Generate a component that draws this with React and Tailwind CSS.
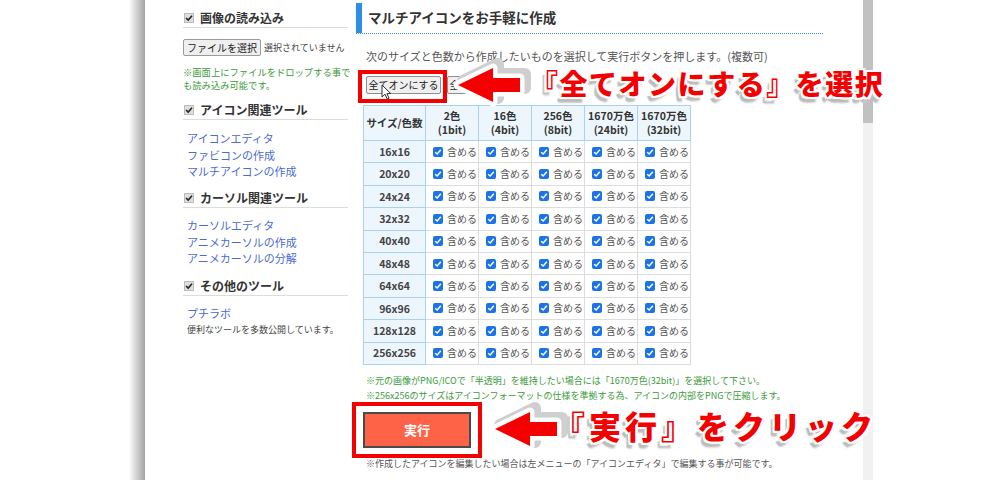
import React from "react";

const sizes = ["16x16", "20x20", "24x24", "32x32", "40x40", "48x48", "64x64", "96x96", "128x128", "256x256"];
const colors = [
  ["2色", "(1bit)"],
  ["16色", "(4bit)"],
  ["256色", "(8bit)"],
  ["1670万色", "(24bit)"],
  ["1670万色", "(32bit)"],
];

const GrayCheck = () => (
  <span className="w-[10px] h-[10px] bg-[#dedede] border border-[#bcbcbc] flex items-center justify-center shrink-0">
    <svg width="8" height="8" viewBox="0 0 8 8">
      <path d="M1 4 L3.2 6 L7 1.8" fill="none" stroke="#222" strokeWidth="1.6" />
    </svg>
  </span>
);

const BlueCheck = () => (
  <span className="w-[10px] h-[10px] rounded-[2px] bg-[#1a73e8] flex items-center justify-center shrink-0">
    <svg width="8" height="8" viewBox="0 0 8 8">
      <path d="M1.2 4.2 L3.2 6 L6.8 1.8" fill="none" stroke="#fff" strokeWidth="1.5" />
    </svg>
  </span>
);

const SideHead = ({ children, className }) => (
  <div className={"flex items-center gap-[6px] h-[18px] pb-[2px] pl-[1px] border-b border-[#dcdcdc] " + className}>
    <GrayCheck />
    <span className="text-[12px] font-bold text-[#333] leading-[16px] whitespace-nowrap">{children}</span>
  </div>
);

const Arrow = ({ className }) => (
  <svg className={className} width="90" height="56" viewBox="0 0 90 56">
    <g transform="translate(5,-4)">
      <path d="M10 28 L45 11 L45 21 L72 21 L72 35 L45 35 L45 45 Z" fill="#fff" stroke="#cfcfcf" strokeWidth="12" strokeLinejoin="round" />
    </g>
    <path d="M10 28 L45 11 L45 21 L72 21 L72 35 L45 35 L45 45 Z" fill="#fff" stroke="#fff" strokeWidth="9" strokeLinejoin="round" />
    <path d="M10 28 L45 11 L45 21 L72 21 L72 35 L45 35 L45 45 Z" fill="#f40000" />
  </svg>
);

const outline =
  "[text-shadow:2px_0_#fff,-2px_0_#fff,0_2px_#fff,0_-2px_#fff,2px_2px_#fff,-2px_2px_#fff,2px_-2px_#fff,-2px_-2px_#fff,-4px_5px_1px_#bdbdbd,-3px_6px_2px_#cfcfcf]";

export default function App() {
  return (
    <div className="relative w-[1000px] h-[480px] overflow-hidden bg-white flex font-['Noto_Sans_CJK_JP','Noto_Sans',sans-serif]">
      <div className="w-[129px] shrink-0" />
      <div className="w-[16px] shrink-0 bg-linear-to-r from-white to-[#a3a3a3]" />

      {/* page */}
      <div className="w-[718px] shrink-0 flex">
        {/* sidebar */}
        <div className="w-[203px] shrink-0 pl-[38px]">
          <SideHead className="mt-[10px]">画像の読み込み</SideHead>
          <div className="mt-[11px] flex items-center gap-[3px] whitespace-nowrap">
            <button className="h-[17px] px-[3px] border border-[#9a9a9a] rounded-[2px] bg-[#efefef] text-[10px] leading-none text-[#222] whitespace-nowrap">
              ファイルを選択
            </button>
            <span className="text-[9px] text-[#444]">選択されていません</span>
          </div>
          <div className="mt-[10px] text-[9.3px] leading-[13px] text-[#3c9a3c] whitespace-nowrap">
            <div>※画面上にファイルをドロップする事で</div>
            <div>も読み込み可能です。</div>
          </div>

          <SideHead className="mt-[10px]">アイコン関連ツール</SideHead>
          <div className="mt-[10px] pl-[4px] text-[11px] leading-[16.5px] text-[#4a6bd0] whitespace-nowrap">
            <div>アイコンエディタ</div>
            <div>ファビコンの作成</div>
            <div>マルチアイコンの作成</div>
          </div>

          <SideHead className="mt-[10.5px]">カーソル関連ツール</SideHead>
          <div className="mt-[9px] pl-[4px] text-[11px] leading-[16.5px] text-[#4a6bd0] whitespace-nowrap">
            <div>カーソルエディタ</div>
            <div>アニメカーソルの作成</div>
            <div>アニメカーソルの分解</div>
          </div>

          <SideHead className="mt-[11.5px]">その他のツール</SideHead>
          <div className="mt-[9px] pl-[4px] text-[11px] leading-[16px] text-[#4a6bd0]">プチラボ</div>
          <div className="mt-[2px] pl-[4px] text-[9px] leading-[14px] text-[#444] whitespace-nowrap">便利なツールを多数公開しています。</div>
        </div>

        {/* main */}
        <div className="w-[467px] shrink-0 ml-[8px]">
          <div className="mt-[3px] border-b border-dotted border-[#4a97de]">
            <div className="h-[30px] border-l-[6px] border-solid border-[#2d8ee8] flex items-center pl-[6px]">
              <h2 className="text-[13.5px] font-bold text-[#333] leading-none">マルチアイコンをお手軽に作成</h2>
            </div>
          </div>

          <p className="mt-[15px] pl-[10px] text-[11px] leading-[14px] text-[#555] whitespace-nowrap">
            次のサイズと色数から作成したいものを選択して実行ボタンを押します。(複数可)
          </p>

          <div className="mt-[13px] pl-[10px] flex gap-[6px]">
            <button className="h-[18px] w-[75px] border border-[#8f8f8f] rounded-[2px] bg-[#efefef] text-[10px] leading-none text-[#222] whitespace-nowrap">
              全てオンにする
            </button>
            <button className="h-[18px] w-[75px] border border-[#8f8f8f] rounded-[2px] bg-[#efefef] text-[10px] leading-none text-[#222] whitespace-nowrap">
              全てオフにする
            </button>
          </div>

          <table className="mt-[11px] ml-[7px] border-collapse table-fixed w-[327px]">
            <thead>
              <tr className="h-[35px]">
                <th className="w-[62px] border border-[#a9d2ef] bg-[#edf6fd] text-[10.5px] font-bold text-[#333] whitespace-nowrap">サイズ/色数</th>
                {colors.map(([a, b], i) => (
                  <th key={i} className="w-[53px] border border-[#a9d2ef] bg-[#edf6fd] text-[10.5px] leading-[14px] font-bold text-[#333]">
                    {a}
                    <br />
                    {b}
                  </th>
                ))}
              </tr>
            </thead>
            <tbody>
              {sizes.map((s) => (
                <tr key={s} className="h-[22.4px]">
                  <td className="border border-[#a9d2ef] bg-[#edf6fd] text-center text-[10.5px] font-bold text-[#444]">{s}</td>
                  {colors.map((c, i) => (
                    <td key={i} className="border border-[#dddddd] p-0">
                      <div className="flex items-center gap-[4px] pl-[7px] whitespace-nowrap">
                        <BlueCheck />
                        <span className="text-[10px] leading-none text-[#555]">含める</span>
                      </div>
                    </td>
                  ))}
                </tr>
              ))}
            </tbody>
          </table>

          <div className="mt-[8.5px] pl-[10px] text-[9px] leading-[15px] text-[#3c9a3c] whitespace-nowrap">
            <div>※元の画像がPNG/ICOで「半透明」を維持したい場合には「1670万色(32bit)」を選択して下さい。</div>
            <div>※256x256のサイズはアイコンフォーマットの仕様を準拠する為、アイコンの内部をPNGで圧縮します。</div>
          </div>

          <button className="mt-[8.5px] ml-[7px] w-[108px] h-[36px] bg-[#ff6347] border-2 border-[#4a4a4a] text-white text-[13px] font-bold">
            実行
          </button>

          <p className="mt-[9px] pl-[10px] text-[9px] leading-[14px] text-[#555] whitespace-nowrap">
            ※作成したアイコンを編集したい場合は左メニューの「アイコンエディタ」で編集する事が可能です。
          </p>
        </div>
      </div>

      {/* scrollbar */}
      <div className="w-[10px] shrink-0 bg-[#f1f1f1] flex flex-col">
        <div className="h-[123px] bg-[#c1c1c1]" />
      </div>
      <div className="flex-1" />

      {/* annotations */}
      <div className="absolute left-[358px] top-[70px] w-[89px] h-[33px] border-4 border-[#f40000]" />
      <svg className="absolute left-[381px] top-[84px]" width="11" height="16" viewBox="0 0 11 16">
        <path d="M1 1 L1 13 L4 10.2 L6.2 15 L8 14.2 L5.9 9.6 L9.8 9.6 Z" fill="#fff" stroke="#333" strokeWidth="1" strokeLinejoin="round" />
      </svg>
      <Arrow className="absolute left-[448px] top-[57px]" />
      <div className={"absolute left-[530px] top-[63px] text-[28px] leading-[40px] font-black tracking-[1.5px] text-[#f40000] whitespace-nowrap " + outline}>
        『全てオンにする』を選択
      </div>

      <div className="absolute left-[352px] top-[402px] w-[130px] h-[56px] border-4 border-[#f40000]" />
      <Arrow className="absolute left-[485px] top-[401px]" />
      <div className={"absolute left-[553px] top-[404px] text-[32px] leading-[42px] font-black tracking-[4px] text-[#f40000] whitespace-nowrap " + outline}>
        『実行』をクリック
      </div>
    </div>
  );
}
